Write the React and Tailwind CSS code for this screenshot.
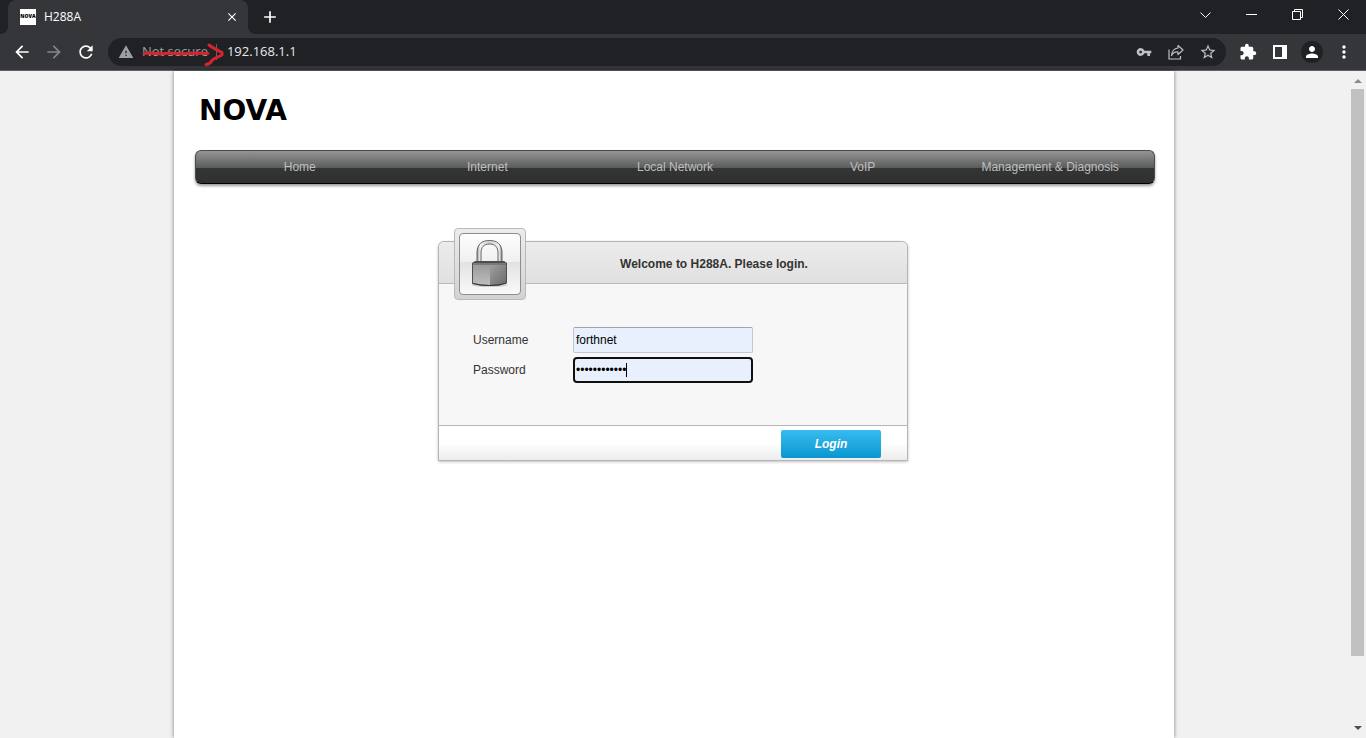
import { useState } from 'react'
import {
  MdArrowBack,
  MdArrowForward,
  MdClose,
  MdAdd,
  MdExtension,
  MdMoreVert,
  MdPerson,
  MdRefresh,
  MdStarBorder,
  MdVpnKey,
  MdWarning,
} from 'react-icons/md'

const menu = ['Home', 'Internet', 'Local Network', 'VoIP', 'Management & Diagnosis']

export default function App() {
  return (
    <div className="min-h-screen flex flex-col bg-[#f1f1f1]">
      <TabStrip />
      <Toolbar />
      <div className="flex-1 flex">
        <div className="flex-1 flex justify-center font-['Liberation_Sans',Arial,sans-serif] text-xs">
          <RouterPage />
        </div>
        <Scrollbar />
      </div>
    </div>
  )
}

function TabStrip() {
  return (
    <div className="flex h-[34px] bg-[#202124] pl-2 text-white font-['Open_Sans',sans-serif]">
      <div className="relative flex items-center w-60 bg-[#35363a] rounded-t-lg pl-3 pr-2">
        <span className="absolute bottom-0 -left-2 size-2 bg-[radial-gradient(circle_at_0_0,#202124_8px,#35363a_8px)]" />
        <span className="absolute bottom-0 -right-2 size-2 bg-[radial-gradient(circle_at_100%_0,#202124_8px,#35363a_8px)]" />
        <span className="flex items-center justify-center size-4 bg-white text-black text-[5px] font-extrabold">NOVA</span>
        <span className="flex-1 ml-2 text-xs">H288A</span>
        <button aria-label="Close tab" className="flex items-center justify-center size-4">
          <MdClose className="size-3.5" />
        </button>
      </div>
      <button aria-label="New tab" className="flex items-center justify-center w-8 ml-1.5">
        <MdAdd className="size-5" />
      </button>
      <div className="flex-1" />
      <WindowButton label="Search tabs" d="M0.5 3.5l5 5 5-5" />
      <WindowButton label="Minimize" d="M0 5.5h11" />
      <WindowButton label="Restore" d="M0.5 2.5h8v8h-8zM2.5 2.5v-2h8v8h-2" />
      <WindowButton label="Close" d="M0.5 0.5l10 10M10.5 0.5l-10 10" />
    </div>
  )
}

function WindowButton({ label, d }) {
  return (
    <button aria-label={label} className="flex items-center justify-center w-[46px] h-7">
      <svg className="size-[11px]" viewBox="0 0 11 11" fill="none" stroke="currentColor">
        <path d={d} />
      </svg>
    </button>
  )
}

function IconButton({ label, className = '', children }) {
  return (
    <button aria-label={label} className={`flex items-center justify-center w-8 h-7 shrink-0 ${className}`}>
      {children}
    </button>
  )
}

function Toolbar() {
  const [url, setUrl] = useState('192.168.1.1')

  return (
    <div className="flex items-center h-[37px] px-1.5 gap-1.5 bg-[#35363a] border-b border-[#5f6063] text-white font-['Open_Sans',sans-serif]">
      <div className="flex">
        <IconButton label="Back"><MdArrowBack className="size-5" /></IconButton>
        <IconButton label="Forward" className="text-[#85868a]"><MdArrowForward className="size-5" /></IconButton>
        <IconButton label="Reload"><MdRefresh className="size-5" /></IconButton>
      </div>

      <div className="flex-1 flex items-center h-7 rounded-full bg-[#202124] pl-2.5 pr-0.5 text-[#9aa0a6]">
        <MdWarning className="size-4" />
        <div className="relative flex items-center h-7 ml-2 pr-2.5 text-[13px]">
          Not secure
          <span className="w-px h-4 ml-2 bg-[#5f6368]" />
          <svg className="absolute left-0 top-0 w-[84px] h-7" viewBox="0 0 84 28" fill="none" stroke="#d8242b" strokeWidth="3" strokeLinecap="round" strokeLinejoin="round">
            <path d="M2 15.500L10 15l8 1 10-1 12 1 12-1 14 .5" />
            <path d="M67 7c4 3 8 5 13 7.500v2.500c-4 2-8 3-10 5.500-1 2-3 3.500-6 4" />
          </svg>
        </div>
        <input
          aria-label="Address"
          value={url}
          onChange={(e) => setUrl(e.target.value)}
          className="flex-1 min-w-0 bg-transparent text-[13px] text-[#e8eaed] outline-none"
        />
        <div className="flex text-[#bdc1c6]">
          <IconButton label="Passwords"><MdVpnKey className="size-4" /></IconButton>
          <IconButton label="Share">
            <svg className="size-4" viewBox="0 0 16 16" fill="none" stroke="currentColor" strokeWidth="1.2">
              <path d="M1 5.500v9.500h11.500v-3" />
              <path d="M10 1.500l5 4.500-5 4.500V8C7.500 7.800 5 8.800 3.500 11.500 3.800 7.500 6 4.500 10 4z" strokeLinejoin="round" />
            </svg>
          </IconButton>
          <IconButton label="Bookmark"><MdStarBorder className="size-[18px]" /></IconButton>
        </div>
      </div>

      <div className="flex">
        <IconButton label="Extensions"><MdExtension className="size-[18px]" /></IconButton>
        <IconButton label="Side panel">
          <svg className="size-3.5" viewBox="0 0 14 14" fill="none" stroke="currentColor" strokeWidth="2">
            <path d="M1 1h12v12H1z" />
            <path d="M9.500 1h3.500v12H9.500z" fill="currentColor" strokeWidth="1" />
          </svg>
        </IconButton>
        <IconButton label="Profile">
          <span className="flex items-center justify-center size-[22px] rounded-full bg-[#202124]">
            <MdPerson className="size-[18px]" />
          </span>
        </IconButton>
        <IconButton label="Menu"><MdMoreVert className="size-5" /></IconButton>
      </div>
    </div>
  )
}

function Scrollbar() {
  return (
    <div className="flex flex-col items-center w-[18px] pl-px pt-2 pb-2">
      <svg className="w-2 h-1" viewBox="0 0 8 4" fill="#8b8b8b"><path d="M4 0l4 4H0z" /></svg>
      <div className="flex-1 flex flex-col w-[13px] pt-1.5 pb-1.5">
        <div className="grow-[570] bg-[#c1c1c1]" />
        <div className="grow-[64]" />
      </div>
      <svg className="w-2 h-1" viewBox="0 0 8 4" fill="#505050"><path d="M0 0h8L4 4z" /></svg>
    </div>
  )
}

function RouterPage() {
  return (
    <main className="w-full max-w-[1000px] bg-white pl-[21px] pr-[19px] shadow-[0_0_4px_rgba(0,0,0,0.5)]">
      <header className="flex items-center h-[79px] pl-1 text-[28px] leading-none font-bold text-black font-['DejaVu_Sans',sans-serif]">
        NOVA
      </header>

      <nav className="flex items-center h-[34px] px-2.5 rounded-md border border-[#4a4a4a] border-b-black bg-[linear-gradient(#959595,#5a5b5b_53%,#333535_53%,#2f3131)] shadow-[0_2px_3px_rgba(0,0,0,0.4)]">
        {menu.map((item) => (
          <a key={item} href="#" className="flex-1 text-center text-[#bfbfbf]">{item}</a>
        ))}
      </nav>

      <div className="flex justify-center pt-[57px] pr-1 pb-10">
        <LoginCard />
      </div>
    </main>
  )
}

function LoginCard() {
  const [form, setForm] = useState({ username: 'forthnet', password: 'forthnet1234' })

  const update = (field, value) => setForm({ ...form, [field]: value })

  return (
    <form
      onSubmit={(e) => e.preventDefault()}
      className="relative w-[470px] rounded-t-md border border-[#b5b5b5] bg-[#f7f7f7] text-[#333] shadow-[0_1px_3px_rgba(0,0,0,0.25)]"
    >
      <div className="absolute left-[15px] -top-3.5 size-[72px] p-1 rounded border border-[#b9b9b9] bg-linear-to-b from-[#ececec] to-[#d2d2d2]">
        <div className="flex items-center justify-center h-full rounded-sm border border-[#8d8d8d] bg-[linear-gradient(#fdfdfd,#f0f0f0_47%,#e2e2e2_47%,#fafafa)]">
          <Padlock />
        </div>
      </div>

      <h1 className="flex items-center justify-center h-[42px] pt-0.5 pl-[82px] rounded-t-md border-b border-[#b9b9b9] bg-linear-to-b from-[#ececec] to-[#e0e0e0] font-bold">
        Welcome to H288A. Please login.
      </h1>

      <div className="flex flex-col gap-1 px-[34px] pt-[43px] pb-[42px]">
        <div className="flex items-center">
          <label htmlFor="username" className="w-[100px]">Username</label>
          <input
            id="username"
            value={form.username}
            onChange={(e) => update('username', e.target.value)}
            className="w-[180px] h-[26px] px-0.5 rounded-xs border border-[#c3c6cf] border-t-[#9fa3ae] bg-[#e8f0fe] text-black outline-none"
          />
        </div>
        <div className="flex items-center">
          <label htmlFor="password" className="w-[100px]">Password</label>
          <div className="relative">
            <input
              id="password"
              type="password"
              value={form.password}
              onChange={(e) => update('password', e.target.value)}
              className="block w-[180px] h-[26px] px-px rounded-sm border-2 border-[#101010] bg-[#e8f0fe] text-black caret-transparent outline-none"
            />
            <span className="absolute left-[53px] top-1.5 w-px h-3.5 bg-black" />
          </div>
        </div>
      </div>

      <div className="flex justify-end h-[35px] pt-1 pr-[26px] border-t border-[#b5b5b5] bg-linear-to-b from-white from-50% to-[#ececec]">
        <button type="submit" className="w-[100px] h-7 rounded-xs bg-linear-to-b from-[#34bdf0] to-[#0796cf] text-white font-bold italic">
          Login
        </button>
      </div>
    </form>
  )
}

function Padlock() {
  return (
    <svg className="w-10 h-12" viewBox="0 0 40 48">
      <defs>
        <linearGradient id="shackle" x1="0" x2="1" y1="0" y2="0">
          <stop offset="0" stopColor="#8f8f8f" />
          <stop offset="0.12" stopColor="#f2f2f2" />
          <stop offset="0.5" stopColor="#d0d0d0" />
          <stop offset="0.88" stopColor="#f2f2f2" />
          <stop offset="1" stopColor="#858585" />
        </linearGradient>
        <linearGradient id="left" x1="0" x2="0" y1="0" y2="1">
          <stop offset="0" stopColor="#9a9a9a" />
          <stop offset="1" stopColor="#bdbdbd" />
        </linearGradient>
        <linearGradient id="right" x1="0" x2="1" y1="0" y2="1">
          <stop offset="0" stopColor="#a0a0a0" />
          <stop offset="1" stopColor="#6b6b6b" />
        </linearGradient>
      </defs>
      <ellipse cx="19.500" cy="45" rx="18" ry="2" fill="#000" opacity="0.15" />
      <path d="M7 24V13C7 4 12 .5 19.500.5S32 4 32 13v11h-4V13c0-6-3-9-8.500-9S11 7 11 13v11z" fill="url(#shackle)" stroke="#555" strokeWidth="0.9" />
      <path d="M2 23l3-2h29l3 2v20l-8 2.500-10 .5-9-.5L2 43.500z" fill="#4e4e4e" />
      <path d="M3 24.500h17V45l-9-.5L3 43z" fill="url(#left)" />
      <path d="M20 24.500h16V43l-7 1.500-9 .5z" fill="url(#right)" />
      <path d="M3 23.800h33" stroke="#8a8a8a" />
      <path d="M2.500 43.500l8 1.500 9 .5 9.500-.5 7.500-2" fill="none" stroke="#333" />
    </svg>
  )
}
